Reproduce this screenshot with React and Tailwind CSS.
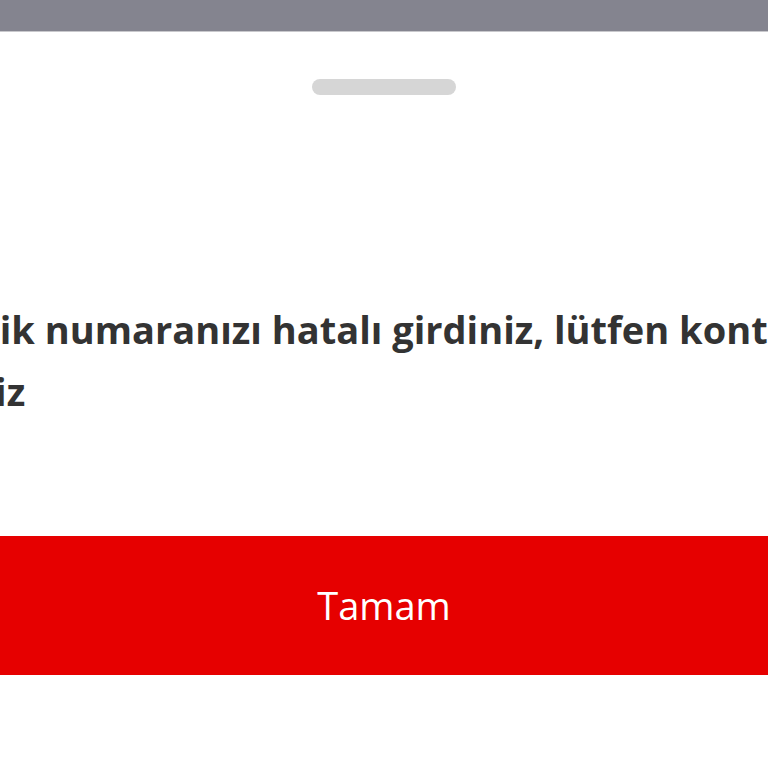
export default function App() {
  return (
    <div className="w-full h-[768px] bg-white flex flex-col overflow-hidden" style={{ fontFamily: '"Open Sans", "Liberation Sans", sans-serif' }}>
      <div className="h-[32px] bg-[#84848f] border-b border-[#c8c8cc] shrink-0" />
      <div className="flex justify-center pt-[47px]">
        <div className="w-[144px] h-[16px] rounded-full bg-[#d6d6d6]" />
      </div>
      <div className="mt-[203px] overflow-hidden text-[#333333] font-bold text-[38px] leading-[62px]">
        <div className="whitespace-nowrap ml-[-86px]">Kimlik numaranızı hatalı girdiniz, lütfen kontrol</div>
        <div className="whitespace-nowrap ml-[-88px]">ediniz</div>
      </div>
      <button className="mt-[114px] h-[139px] w-full bg-[#e60000] text-white text-[38px] flex items-center justify-center shrink-0">
        Tamam
      </button>
    </div>
  );
}
